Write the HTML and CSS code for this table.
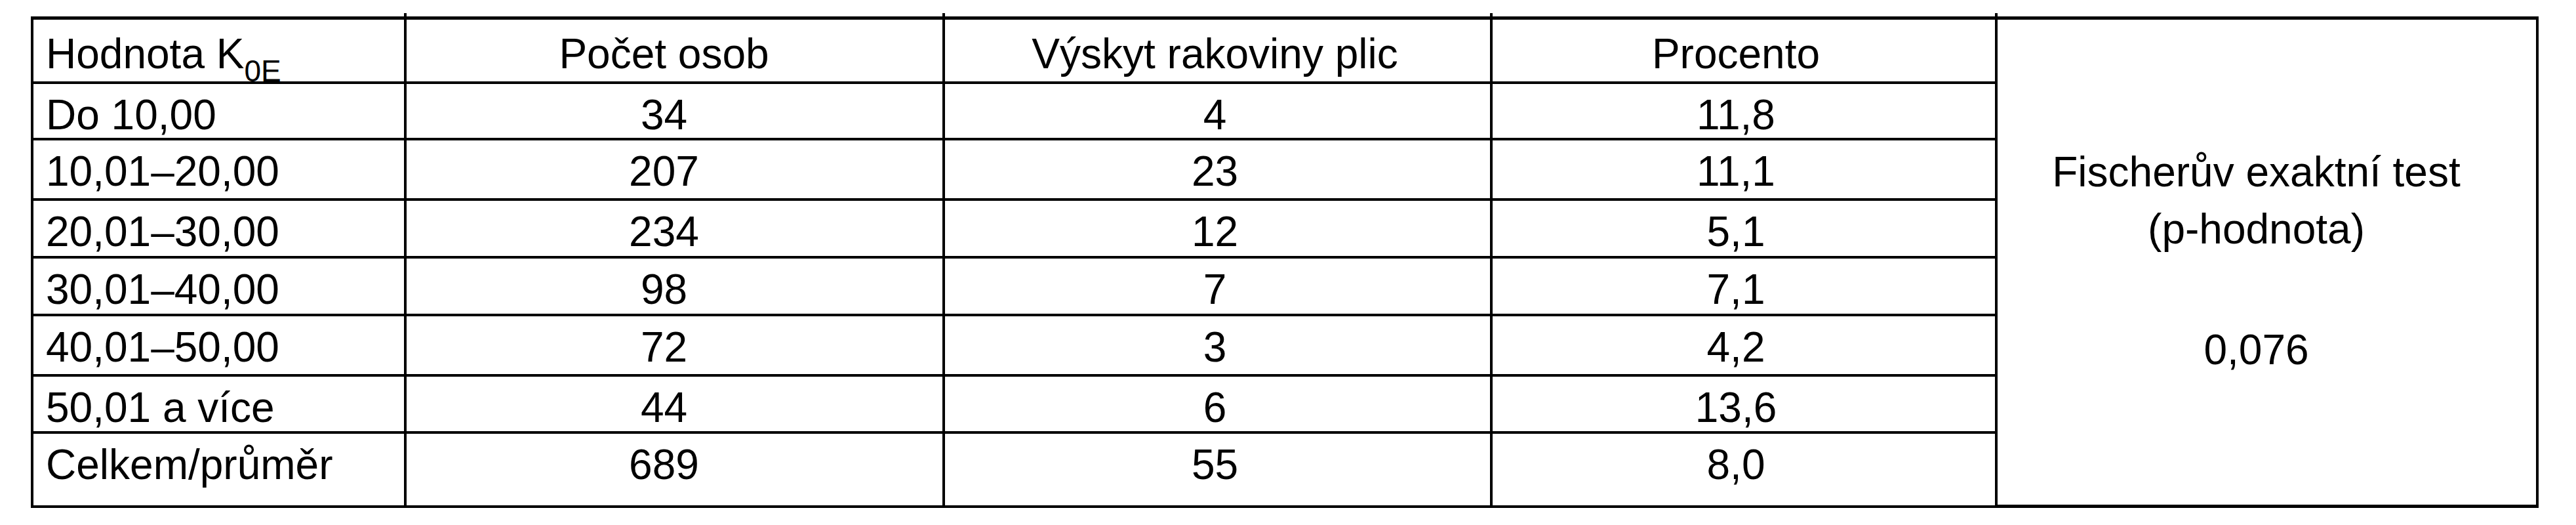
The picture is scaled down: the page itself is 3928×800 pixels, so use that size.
FILE: index.html
```html
<!DOCTYPE html>
<html lang="cs">
<head>
<meta charset="utf-8">
<title>Tabulka</title>
<link rel="stylesheet" href="styles.css">
</head>
<body>
<div class="table">
  <div class="cell c1 head">Hodnota K<span class="sub">0E</span></div>
  <div class="cell c2 head tick">Počet osob</div>
  <div class="cell c3 head tick">Výskyt rakoviny plic</div>
  <div class="cell c4 head tick">Procento</div>
  <div class="cell c5 merged tick">
    <div class="m1">Fischerův exaktní test</div>
    <div class="m2">(p-hodnota)</div>
    <div class="m3">0,076</div>
  </div>

  <div class="cell c1">Do 10,00</div>
  <div class="cell c2">34</div>
  <div class="cell c3">4</div>
  <div class="cell c4">11,8</div>

  <div class="cell c1">10,01–20,00</div>
  <div class="cell c2">207</div>
  <div class="cell c3">23</div>
  <div class="cell c4">11,1</div>

  <div class="cell c1">20,01–30,00</div>
  <div class="cell c2">234</div>
  <div class="cell c3">12</div>
  <div class="cell c4">5,1</div>

  <div class="cell c1">30,01–40,00</div>
  <div class="cell c2">98</div>
  <div class="cell c3">7</div>
  <div class="cell c4">7,1</div>

  <div class="cell c1">40,01–50,00</div>
  <div class="cell c2">72</div>
  <div class="cell c3">3</div>
  <div class="cell c4">4,2</div>

  <div class="cell c1">50,01 a více</div>
  <div class="cell c2">44</div>
  <div class="cell c3">6</div>
  <div class="cell c4">13,6</div>

  <div class="cell c1">Celkem/průměr</div>
  <div class="cell c2">689</div>
  <div class="cell c3">55</div>
  <div class="cell c4">8,0</div>
</div>
</body>
</html>
```

FILE: styles.css
```css
html, body {
  margin: 0;
  padding: 0;
  background: #ffffff;
}

body {
  font-family: "Liberation Sans", Arial, sans-serif;
  font-size: 64px;
  color: #000000;
  line-height: normal;
}

.table {
  display: grid;
  grid-template-columns: 569px 821px 835px 770px 825px;
  grid-template-rows: 98px 86px 92px 88px 88px 92px 87px 113px;
  width: 3824px;
  margin: 25px 0 0 47px;
  border-top: 5px solid #000;
  border-left: 4px solid #000;
  box-sizing: border-box;
}

.cell {
  position: relative;
  box-sizing: border-box;
  border-right: 4px solid #000;
  border-bottom: 4px solid #000;
  padding-top: 10px;
  white-space: nowrap;
}

.cell.head {
  padding-top: 15px;
}

.c1 {
  padding-left: 19px;
  text-align: left;
}

.c2 {
  text-align: center;
  padding-right: 32px;
}

.c3 {
  text-align: center;
  padding-right: 8px;
}

.c4 {
  text-align: center;
  padding-right: 24px;
}

.c5 {
  text-align: center;
  padding-right: 32px;
}

.merged {
  grid-column: 5;
  grid-row: 1 / 9;
  padding-top: 195px;
  border-bottom-width: 5px;
}

.m2 {
  margin-top: 13px;
}

.m3 {
  margin-top: 110px;
}

.tick::before {
  content: "";
  position: absolute;
  left: -4px;
  top: -10px;
  width: 4px;
  height: 10px;
  background: #000;
}

.sub {
  font-size: 46px;
  vertical-align: -20px;
  line-height: normal;
}
```
